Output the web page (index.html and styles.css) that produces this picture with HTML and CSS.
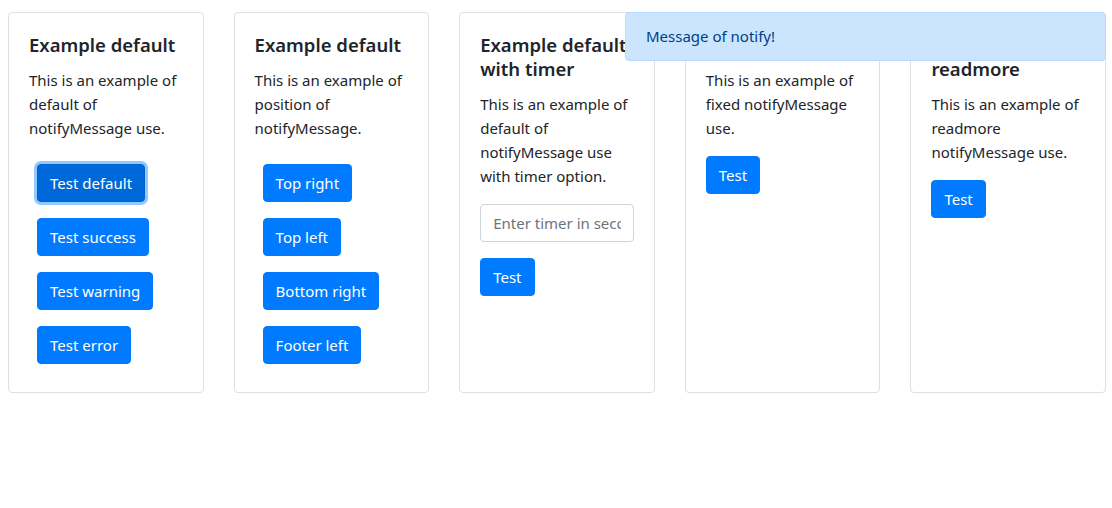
FILE: index.html
```html
<!DOCTYPE html>
<html lang="en">
<head>
<meta charset="utf-8">
<title>notifyMessage examples</title>
<link rel="stylesheet" href="styles.css">
</head>
<body>
<div class="row">
  <div class="card">
    <h5 class="card-title">Example default</h5>
    <p class="card-text">This is an example of default of notifyMessage use.</p>
    <div class="btn-stack">
      <button class="btn focus">Test default</button>
      <button class="btn">Test success</button>
      <button class="btn">Test warning</button>
      <button class="btn">Test error</button>
    </div>
  </div>
  <div class="card">
    <h5 class="card-title">Example default</h5>
    <p class="card-text">This is an example of position of notifyMessage.</p>
    <div class="btn-stack">
      <button class="btn">Top right</button>
      <button class="btn">Top left</button>
      <button class="btn">Bottom right</button>
      <button class="btn">Footer left</button>
    </div>
  </div>
  <div class="card">
    <h5 class="card-title">Example default with timer</h5>
    <p class="card-text">This is an example of default of notifyMessage use with timer option.</p>
    <input class="form-control" type="text" placeholder="Enter timer in seconds">
    <div><button class="btn">Test</button></div>
  </div>
  <div class="card">
    <h5 class="card-title">Example fixed</h5>
    <p class="card-text">This is an example of fixed notifyMessage use.</p>
    <div><button class="btn">Test</button></div>
  </div>
  <div class="card">
    <h5 class="card-title">Example with readmore</h5>
    <p class="card-text">This is an example of readmore notifyMessage use.</p>
    <div><button class="btn">Test</button></div>
  </div>
</div>
<div class="notify">Message of notify!</div>
</body>
</html>
```

FILE: styles.css
```css
* { box-sizing: border-box; }
html, body { margin: 0; }
body {
  padding: 12px 6px 0 8px;
  font-family: "Noto Sans", "Open Sans", sans-serif;
  font-size: 15px;
  line-height: 24px;
  color: #212529;
  background: #fff;
}
.row {
  display: flex;
  gap: 30px;
  align-items: stretch;
}
.card {
  flex: 1 1 0;
  min-width: 0;
  border: 1px solid rgba(0,0,0,.125);
  border-radius: 4px;
  padding: 20px;
}
.card-title {
  margin: 0 0 11px;
  font-size: 18.5px;
  line-height: 24px;
  font-weight: 600;
}
.card-text {
  margin: 0 0 16px;
}
.btn-stack {
  display: flex;
  flex-direction: column;
  align-items: flex-start;
  gap: 16px;
  padding: 8px;
}
.btn {
  display: inline-block;
  font-family: inherit;
  font-size: 15px;
  line-height: 24px;
  padding: 6px 12px;
  color: #fff;
  background: #007bff;
  border: 1px solid #007bff;
  border-radius: 4px;
  cursor: pointer;
}
.btn.focus {
  background: #0069d9;
  border-color: #0062cc;
  box-shadow: 0 0 0 3px rgba(38,143,255,.5);
}
.form-control {
  display: block;
  width: 100%;
  height: 38px;
  padding: 6px 12px;
  margin: 0 0 16px;
  font-family: inherit;
  font-size: 15px;
  line-height: 24px;
  color: #495057;
  border: 1px solid #ced4da;
  border-radius: 4px;
}
.form-control::placeholder { color: #6c757d; }
.notify {
  position: fixed;
  top: 12px;
  right: 6px;
  width: 481px;
  padding: 11px 20px 12px;
  background: #cce5ff;
  border: 1px solid #b8daff;
  border-radius: 4px;
  color: #004085;
  font-size: 15px;
  line-height: 24px;
}
```
